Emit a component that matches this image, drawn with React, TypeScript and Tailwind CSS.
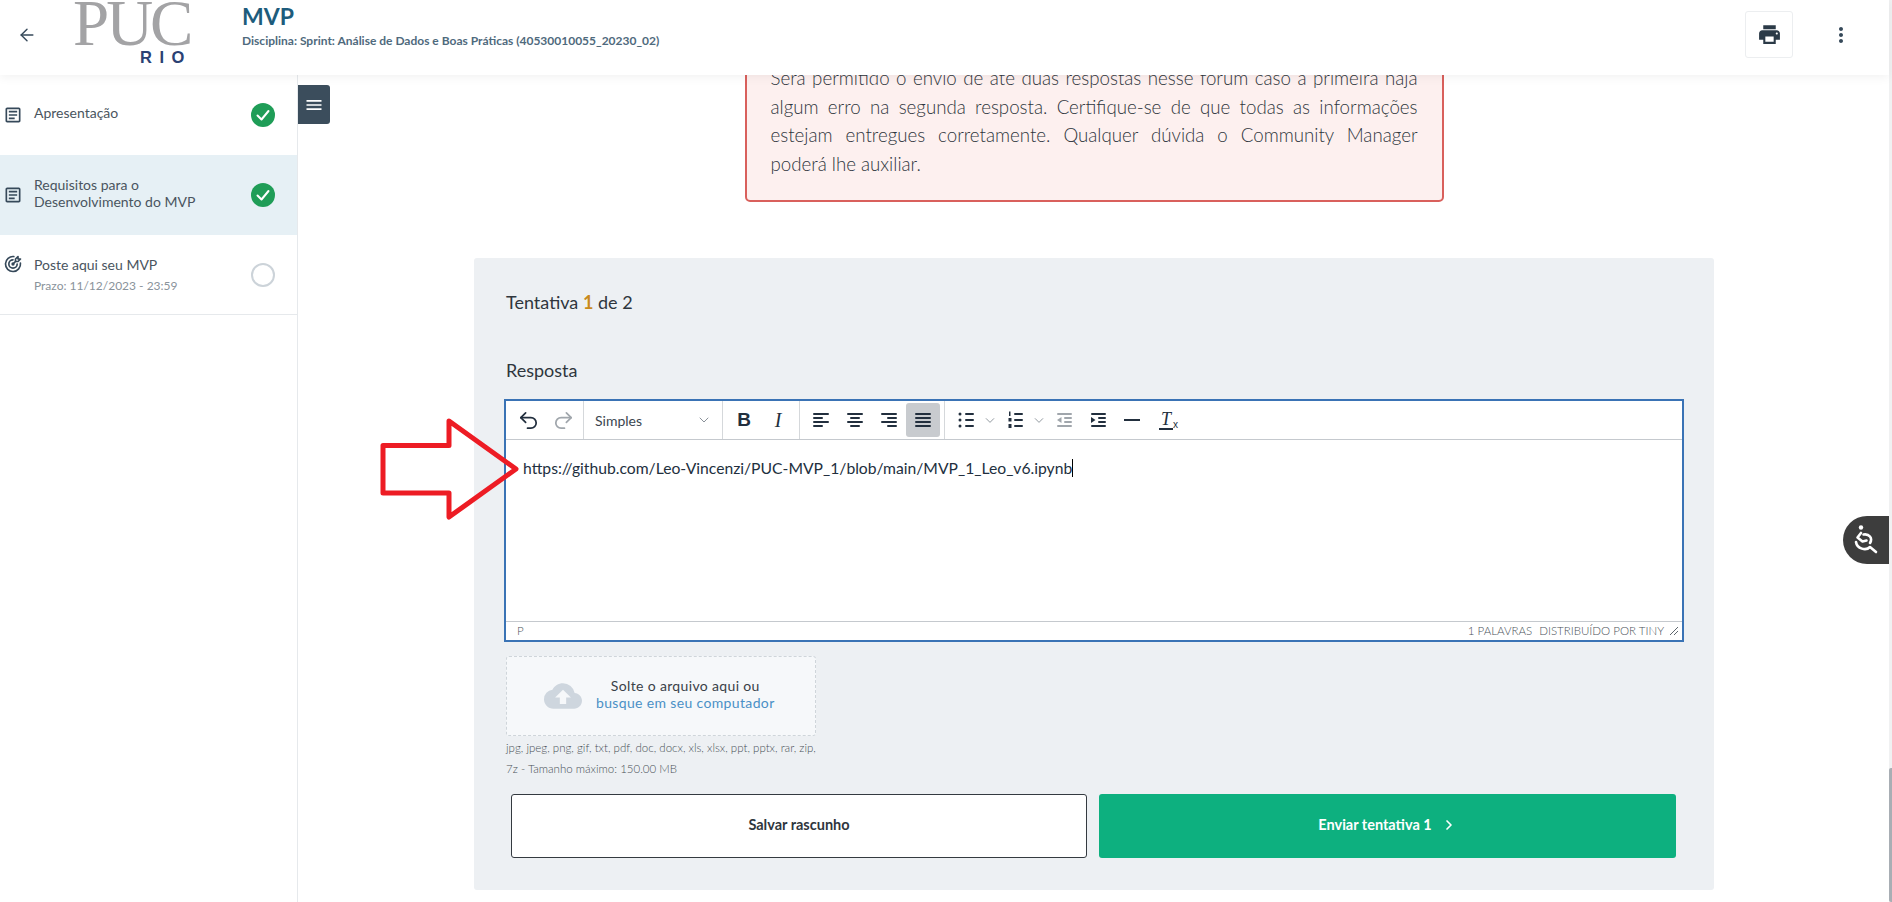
import React from "react"
import { ArrowLeft, ChevronDown, ChevronRight, Redo2, Undo2 } from "lucide-react"
import { MdCloudUpload, MdMenu, MdMoreVert, MdOutlineArticle, MdPrint } from "react-icons/md"
import { TbTargetArrow } from "react-icons/tb"

function Lines({ rows, dim }: { rows: [number, number][]; dim?: boolean }) {
  return (
    <svg width="24" height="24" viewBox="0 0 24 24" fill={dim ? "#a0a6ac" : "#222f3e"}>
      {rows.map(([x, w], i) => (
        <rect key={i} x={x} y={5 + i * 4} width={w} height="2" rx="1" />
      ))}
    </svg>
  )
}

function ToolButton({ children, active }: { children: React.ReactNode; active?: boolean }) {
  return (
    <div className={`flex h-[34px] w-[34px] items-center justify-center rounded-[3px] ${active ? "bg-[#c8cbcf]" : ""}`}>
      {children}
    </div>
  )
}

function ListIcon({ numbered }: { numbered?: boolean }) {
  return (
    <svg width="24" height="24" viewBox="0 0 24 24" fill="#222f3e">
      <rect x="11" y="5" width="9" height="2" rx="1" />
      <rect x="11" y="11" width="9" height="2" rx="1" />
      <rect x="11" y="17" width="9" height="2" rx="1" />
      {numbered ? (
        <>
          <rect x="6" y="3.5" width="1.5" height="4.5" />
          <rect x="5.5" y="10" width="3" height="3.5" />
          <rect x="5.5" y="16" width="3" height="4" />
        </>
      ) : (
        <>
          <circle cx="6" cy="6" r="1.5" />
          <circle cx="6" cy="12" r="1.5" />
          <circle cx="6" cy="18" r="1.5" />
        </>
      )}
    </svg>
  )
}

function IndentIcon({ out }: { out?: boolean }) {
  const color = out ? "#a0a6ac" : "#222f3e"
  return (
    <svg width="24" height="24" viewBox="0 0 24 24" fill={color}>
      <rect x="5" y="5" width="15" height="2" rx="1" />
      <rect x="12" y="9" width="8" height="2" rx="1" />
      <rect x="12" y="13" width="8" height="2" rx="1" />
      <rect x="5" y="17" width="15" height="2" rx="1" />
      <path d={out ? "M9.5 9 5 12l4.5 3z" : "M5 9l4.5 3L5 15z"} />
    </svg>
  )
}

function DoneMark() {
  return (
    <svg width="24" height="24" viewBox="0 0 24 24" className="shrink-0">
      <circle cx="12" cy="12" r="12" fill="#1f9d57" />
      <path d="M6.5 12.5 10.5 16.5 17.5 8" fill="none" stroke="#fff" strokeWidth="2" strokeLinecap="round" strokeLinejoin="round" />
    </svg>
  )
}

function SideItem({
  icon,
  title,
  sub,
  active,
  done,
  last,
}: {
  icon: React.ReactNode
  title: React.ReactNode
  sub?: string
  active?: boolean
  done?: boolean
  last?: boolean
}) {
  return (
    <div className={`flex h-[80px] items-center pl-[3px] pr-[22px] ${active ? "bg-[#e6f0f5]" : ""} ${last ? "border-b border-[#e6e9ec]" : ""}`}>
      <div className="mr-[11px] flex w-[20px] shrink-0 justify-center text-[#36495a]">{icon}</div>
      <div className="flex-1 text-[14px] leading-[17px] text-[#4a5560]">
        {title}
        {sub && <div className="mt-[5px] text-[12px] leading-[15px] text-[#8a939b]">{sub}</div>}
      </div>
      {done ? <DoneMark /> : <div className="h-6 w-6 shrink-0 rounded-full border-2 border-[#ccd3d9]" />}
    </div>
  )
}

export default function App() {
  return (
    <div className="flex h-[902px] w-full overflow-hidden bg-white font-['Lato',sans-serif] text-[#343a40]">
      <div className="relative flex min-w-0 flex-1 flex-col">
        <header className="z-10 flex h-[75px] shrink-0 items-center bg-white pb-[6px] pl-[17px] pr-[36px] shadow-[0_2px_10px_rgba(0,0,0,0.06)]">
          <ArrowLeft size={20} strokeWidth={1.7} className="text-[#36495a]" />
          <div className="mb-[7px] ml-[36px] flex w-[131px] shrink-0 flex-col items-start">
            <div className="h-[48px] font-['Liberation_Serif',serif] text-[65px] leading-[54px] tracking-[-3px] text-[#a3a3a5]">PUC</div>
            <div className="ml-[67px] mt-[4px] font-['Liberation_Sans',sans-serif] text-[16.5px] font-bold leading-[18px] tracking-[7.5px] text-[#2b4173]">RIO</div>
          </div>
          <div className="mb-[19px] ml-[38px] flex-1">
            <div className="text-[23px] font-bold leading-[28px] text-[#1d5c7c]">MVP</div>
            <div className="mt-[4px] text-[12px] font-bold leading-[14px] text-[#4f6a7d]">
              Disciplina: Sprint: Análise de Dados e Boas Práticas (40530010055_20230_02)
            </div>
          </div>
          <div className="flex h-[47px] w-[48px] items-center justify-center rounded-[3px] border border-[#eceef0]">
            <MdPrint size={25} className="text-[#2b3a47]" />
          </div>
          <MdMoreVert size={24} className="ml-[36px] text-[#36495a]" />
        </header>

        <div className="flex min-h-0 flex-1">
          <aside className="w-[298px] shrink-0 border-r border-[#e6e9ec] bg-white">
            <SideItem
              icon={<MdOutlineArticle size={24} />}
              title={<span className="mb-[6px] block">Apresentação</span>}
              done
            />
            <SideItem
              icon={<MdOutlineArticle size={24} />}
              title={
                <span className="mb-[4px] block">
                  Requisitos para o
                  <br />
                  Desenvolvimento do MVP
                </span>
              }
              active
              done
            />
            <SideItem icon={<TbTargetArrow size={24} className="-mt-[22px]" />} title="Poste aqui seu MVP" sub="Prazo: 11/12/2023 - 23:59" last />
          </aside>

          <main className="relative min-w-0 flex-1 overflow-hidden pl-[176px]">
            <div className="absolute left-0 top-[10px] flex h-[39px] w-[32px] items-center justify-center rounded-r-[3px] bg-[#3b4d5c]">
              <MdMenu size={20} className="text-white" />
            </div>

            <div className="w-[1240px]">
              <div className="mx-auto -mt-[20px] w-[699px] rounded-[5px] border-2 border-[#d9605c] bg-[#fdf0ef] px-[24px] pb-[22px] pt-[7px] text-justify text-[18.7px] font-light leading-[28.5px] text-[#2f363d]">
                Será permitido o envio de até duas respostas nesse fórum caso a primeira haja algum erro na segunda resposta. Certifique-se de que todas as informações estejam entregues corretamente. Qualquer dúvida o Community Manager poderá lhe auxiliar.
              </div>

              <section className="relative mt-[56px] rounded-[3px] bg-[#edf0f3] px-[32px] pb-[32px] pt-[32px]">
                <div className="text-[18px] leading-[24px] text-[#2f363d]">
                  Tentativa <span className="font-bold text-[#c98a1b]">1</span> de 2
                </div>
                <div className="mt-[44px] text-[18px] leading-[24px] text-[#2f363d]">Resposta</div>

                <div className="-ml-[2px] mt-[17px] flex h-[243px] w-[1180px] flex-col border-2 border-[#3a73b5] bg-white">
                  <div className="flex h-[39px] shrink-0 items-center border-b border-[#c5c9ce]">
                    <div className="flex h-full items-center gap-[1px] border-r border-[#d5d8db] pl-[5px] pr-[3px]">
                      <ToolButton><Undo2 size={23} strokeWidth={1.8} className="text-[#222f3e]" /></ToolButton>
                      <ToolButton><Redo2 size={23} strokeWidth={1.8} className="text-[#a0a6ac]" /></ToolButton>
                    </div>
                    <div className="flex h-full w-[139px] items-center justify-between border-r border-[#d5d8db] pl-[11px] pr-[10px] text-[14px] text-[#3b4650]">
                      Simples
                      <ChevronDown size={16} strokeWidth={1.5} className="text-[#8a9199]" />
                    </div>
                    <div className="flex h-full items-center border-r border-[#d5d8db] px-[4px]">
                      <ToolButton><span className="font-['Liberation_Sans',sans-serif] text-[19px] font-bold text-[#222f3e]">B</span></ToolButton>
                      <ToolButton><span className="font-['Liberation_Serif',serif] text-[20px] italic text-[#222f3e]">I</span></ToolButton>
                    </div>
                    <div className="flex h-full items-center border-r border-[#d5d8db] px-[4px]">
                      <ToolButton><Lines rows={[[4, 16], [4, 10], [4, 16], [4, 10]]} /></ToolButton>
                      <ToolButton><Lines rows={[[4, 16], [7, 10], [4, 16], [7, 10]]} /></ToolButton>
                      <ToolButton><Lines rows={[[4, 16], [10, 10], [4, 16], [10, 10]]} /></ToolButton>
                      <ToolButton active><Lines rows={[[4, 16], [4, 16], [4, 16], [4, 16]]} /></ToolButton>
                    </div>
                    <div className="flex h-full items-center px-[4px]">
                      <ToolButton><ListIcon /></ToolButton>
                      <ChevronDown size={15} strokeWidth={1.5} className="-ml-[1px] w-[16px] text-[#8a9199]" />
                      <ToolButton><ListIcon numbered /></ToolButton>
                      <ChevronDown size={15} strokeWidth={1.5} className="-ml-[1px] w-[16px] text-[#8a9199]" />
                      <ToolButton><IndentIcon out /></ToolButton>
                      <ToolButton><IndentIcon /></ToolButton>
                      <ToolButton><div className="h-[2px] w-[16px] bg-[#222f3e]" /></ToolButton>
                      <ToolButton>
                        <div className="relative border-b-2 border-[#222f3e] px-[2px] font-['Liberation_Serif',serif] text-[18px] italic leading-[18px] text-[#222f3e]">
                          T
                          <span className="absolute -right-[5px] bottom-[-2px] font-['Liberation_Sans',sans-serif] text-[10px] not-italic leading-[10px]">x</span>
                        </div>
                      </ToolButton>
                    </div>
                  </div>

                  <div className="flex-1 px-[17px] pt-[17px] text-[15.7px] leading-[22px] text-[#222f3e]">
                    <span className="border-r border-black">https://github.com/Leo-Vincenzi/PUC-MVP_1/blob/main/MVP_1_Leo_v6.ipynb</span>
                  </div>

                  <div className="flex h-[19px] shrink-0 items-center justify-between border-t border-[#c5c9ce] pl-[11px] pr-[3px] text-[11.5px] font-light leading-[18px] text-[#4a5158]">
                    <span>P</span>
                    <div className="flex items-center">
                      <span>1 PALAVRAS</span>
                      <span className="ml-[7px]">DISTRIBUÍDO POR TINY</span>
                      <svg width="10" height="10" viewBox="0 0 10 10" className="ml-[5px]" stroke="#5f676e" strokeWidth="1" fill="none">
                        <path d="M1 9 9 1M5 9 9 5" />
                      </svg>
                    </div>
                  </div>
                </div>

                <div className="mt-[14px] flex h-[80px] w-[310px] items-center rounded-[3px] border border-dashed border-[#cfd5da] bg-[#f6f8fa] pl-[37px]">
                  <MdCloudUpload size={38} className="text-[#ced6de]" />
                  <div className="mb-[4px] ml-[14px] text-center text-[14px] leading-[17px] tracking-[0.35px]">
                    <div className="text-[#3a4148]">Solte o arquivo aqui ou</div>
                    <div className="text-[#4a90c6]">busque em seu computador</div>
                  </div>
                </div>
                <div className="mt-[1px] w-[316px] text-[11.5px] font-light leading-[21px] text-[#4a5158]">
                  jpg, jpeg, png, gif, txt, pdf, doc, docx, xls, xlsx, ppt, pptx, rar, zip, 7z - Tamanho máximo: 150.00 MB
                </div>

                <div className="ml-[5px] mt-[15px] flex w-[1165px] gap-[12px]">
                  <button className="flex h-[64px] w-[576px] shrink-0 items-center justify-center rounded-[3px] border border-[#343a40] bg-white pb-[2px] text-[14.5px] font-bold text-[#2f363d]">
                    Salvar rascunho
                  </button>
                  <button className="flex h-[64px] flex-1 items-center justify-center rounded-[3px] bg-[#0db07f] pb-[2px] text-[14.5px] font-bold text-white">
                    Enviar tentativa 1
                    <ChevronRight size={16} strokeWidth={2.5} className="ml-[9px]" />
                  </button>
                </div>
              </section>
            </div>
          </main>
        </div>

        <svg width="150" height="110" viewBox="0 0 150 110" className="absolute left-[375px] top-[414px] z-20" fill="none">
          <path d="M8 31.5H74V7L141 55 74 103V79H8Z" stroke="#ed1c24" strokeWidth="5" strokeLinejoin="round" />
        </svg>

        <div className="absolute right-0 top-[516px] z-20 flex h-[48px] w-[46px] items-center justify-center rounded-l-[24px] bg-[#3d3d3d]">
          <svg width="24" height="30" viewBox="0 0 24 30" fill="none" stroke="#fff" strokeWidth="2.6" strokeLinecap="round" strokeLinejoin="round">
            <circle cx="7" cy="2.5" r="2.2" fill="#fff" stroke="none" />
            <path d="M7 8 3.5 12.5 8.5 16.5 12.5 15.5" />
            <path d="M9.5 9.5C15 8.5 19 13 16 18" />
            <path d="M2 17C3 24 12 26 16 22L22 27" />
          </svg>
        </div>
      </div>

      <div className="flex h-full w-[3px] shrink-0 flex-col justify-end bg-[#f0f1f2]">
        <div className="h-[134px] rounded-l-[2px] bg-[#a8aeb4]" />
      </div>
    </div>
  )
}
